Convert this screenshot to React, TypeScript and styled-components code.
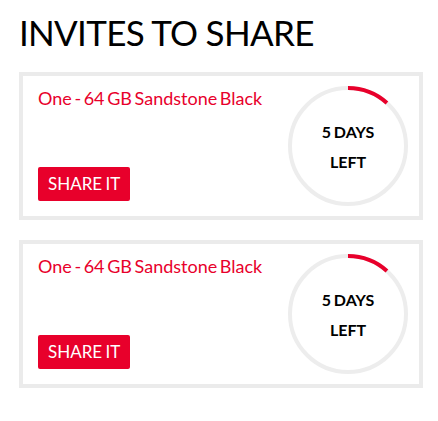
import React from 'react'
import styled, { createGlobalStyle } from 'styled-components'

const GlobalStyle = createGlobalStyle`
  body {
    margin: 0;
    background: #fff;
    font-family: Lato, "Open Sans", sans-serif;
  }
`

const Page = styled.div`
  width: 404px;
  padding: 11px 0 0 19px;
`

const Title = styled.h1`
  margin: 0 0 18px 0;
  font-size: 35px;
  font-weight: 400;
  line-height: 43px;
  letter-spacing: -0.7px;
  color: #000;
`

const List = styled.div`
  display: flex;
  flex-direction: column;
  gap: 20px;
`

const Card = styled.div`
  display: flex;
  justify-content: space-between;
  border: 4px solid #ebebeb;
`

const Info = styled.div`
  display: flex;
  flex-direction: column;
  justify-content: space-between;
  align-items: flex-start;
  padding: 12px 0 15px 15px;
`

const ProductName = styled.div`
  font-size: 18px;
  line-height: 1.2;
  word-spacing: -2px;
  color: #e8002b;
`

const ShareButton = styled.button`
  height: 34px;
  padding: 0 10px;
  border: none;
  border-radius: 2px;
  background: #e8002b;
  color: #fff;
  font-family: inherit;
  font-size: 17px;
  line-height: 34px;
  word-spacing: -1px;
  cursor: pointer;
`

const Countdown = styled.div`
  position: relative;
  width: 120px;
  height: 120px;
  margin: 10px 11px 10px 0;
`

const Ring = styled.svg`
  position: absolute;
  inset: 0;
`

const CountText = styled.div`
  position: relative;
  height: 100%;
  display: flex;
  flex-direction: column;
  justify-content: center;
  align-items: center;
  padding-top: 2px;
  box-sizing: border-box;
  font-size: 16px;
  font-weight: 700;
  line-height: 30px;
  word-spacing: -1px;
  color: #000;
`

const invites = [
  { id: 1, name: 'One - 64 GB Sandstone Black', days: 5, progress: 0.117 },
  { id: 2, name: 'One - 64 GB Sandstone Black', days: 5, progress: 0.117 },
]

function Timer({ days, progress }: { days: number; progress: number }) {
  const r = 58
  const c = 2 * Math.PI * r
  return (
    <Countdown>
      <Ring width="120" height="120" viewBox="0 0 120 120">
        <circle cx="60" cy="60" r={r} fill="none" stroke="#ededed" strokeWidth="4" />
        <circle
          cx="60"
          cy="60"
          r={r}
          fill="none"
          stroke="#e8002b"
          strokeWidth="4"
          strokeDasharray={`${c * progress} ${c}`}
          transform="rotate(-90 60 60)"
        />
      </Ring>
      <CountText>
        <span>{days} DAYS</span>
        <span>LEFT</span>
      </CountText>
    </Countdown>
  )
}

export default function App() {
  return (
    <Page>
      <GlobalStyle />
      <Title>INVITES TO SHARE</Title>
      <List>
        {invites.map((invite) => (
          <Card key={invite.id}>
            <Info>
              <ProductName>{invite.name}</ProductName>
              <ShareButton>SHARE IT</ShareButton>
            </Info>
            <Timer days={invite.days} progress={invite.progress} />
          </Card>
        ))}
      </List>
    </Page>
  )
}
